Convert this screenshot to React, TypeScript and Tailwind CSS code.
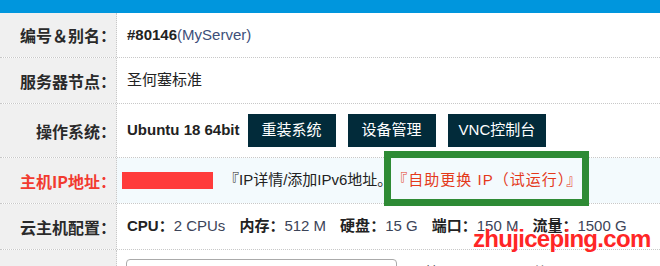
const FONT = { fontFamily: '"Liberation Sans", "Noto Sans CJK SC", sans-serif' };
const CJK = { fontFamily: '"Noto Sans CJK SC", sans-serif' };

function Row({
  label,
  labelClass = "text-[#2a2a2a]",
  rowClass = "pl-[10px]",
  h,
  children,
}: {
  label: string;
  labelClass?: string;
  rowClass?: string;
  h: string;
  children: React.ReactNode;
}) {
  return (
    <div className={`flex border-b border-dotted border-[#c8c8c8] ${h}`}>
      <div
        className={`w-[117px] shrink-0 flex items-center justify-end bg-[#f0f0f0] border-r border-dotted border-[#c8c8c8] text-[16px] font-bold ${labelClass}`}
        style={CJK}
      >
        {label}
      </div>
      <div className={`flex-1 flex items-center text-[15px] ${rowClass}`}>{children}</div>
    </div>
  );
}

function Btn({ children, px = "px-[14px]" }: { children: React.ReactNode; px?: string }) {
  return (
    <div className={`h-[33px] ${px} flex items-center bg-[#022b3a] text-white text-[15px]`}>
      {children}
    </div>
  );
}

function Spec({ k, v }: { k: string; v: string }) {
  return (
    <span className="mr-[14px]">
      <b className="text-[#222]">{k}：</b>
      <span className="text-[#3c4458]">{v}</span>
    </span>
  );
}

export default function App() {
  return (
    <div className="relative w-[660px] h-[266px] overflow-hidden bg-white" style={FONT}>
      <div className="h-[13px] bg-[#0096dd]" />
      <Row label="编号＆别名：" h="h-[45px]">
        <b className="text-[#222]">#80146</b>
        <span className="text-[#3d4f7a]">(MyServer)</span>
      </Row>
      <Row label="服务器节点：" h="h-[46px]">
        <span className="text-[#222]">圣何塞标准</span>
      </Row>
      <Row label="操作系统：" h="h-[54px]">
        <b className="text-[15px] text-[#222] mr-[8px]">Ubuntu 18 64bit</b>
        <div className="flex gap-[12px]">
          <Btn>重装系统</Btn>
          <Btn>设备管理</Btn>
          <Btn px="px-[11px]">VNC控制台</Btn>
        </div>
      </Row>
      <Row label="主机IP地址：" labelClass="text-[#f23a2f]" rowClass="bg-[#f3fafd] pl-[5px]" h="h-[46px]">
        <div className="w-[91px] h-[17px] bg-[#ff3b3b] mr-[11px]" />
        <span className="text-[#222]">『IP详情/添加IPv6地址。</span>
        <span className="text-[#e4391b] tracking-[1px]">『自助更换 IP（试运行）』</span>
      </Row>
      <Row label="云主机配置：" h="h-[46px]">
        <Spec k="CPU" v="2 CPUs" />
        <Spec k="内存" v="512 M" />
        <Spec k="硬盘" v="15 G" />
        <Spec k="端口" v="150 M" />
        <Spec k="流量" v="1500 G" />
      </Row>
      <div className="flex h-[40px]">
        <div className="w-[117px] shrink-0 bg-[#f0f0f0] border-r border-dotted border-[#c8c8c8]" />
        <div className="flex-1 flex items-start pt-[9px] pl-[9px] text-[15px] text-[#222]">
          <div className="w-[271px] h-[30px] rounded-[4px] border border-[#aaa]" />
          <span className="ml-[28px] mt-[3px]">快照</span>
          <span className="ml-[70px] mt-[3px]">时间</span>
        </div>
      </div>

      <div className="absolute left-[384px] top-[151px] w-[205px] h-[55px] border-[7px] border-[#2e8b35]" />
      <div
        className="absolute left-[473px] top-[221px] text-[24px] font-bold text-[#ff2626] tracking-[-0.7px]"
        style={{ fontFamily: '"Liberation Sans", sans-serif' }}
      >
        zhujiceping.com
      </div>
    </div>
  );
}
